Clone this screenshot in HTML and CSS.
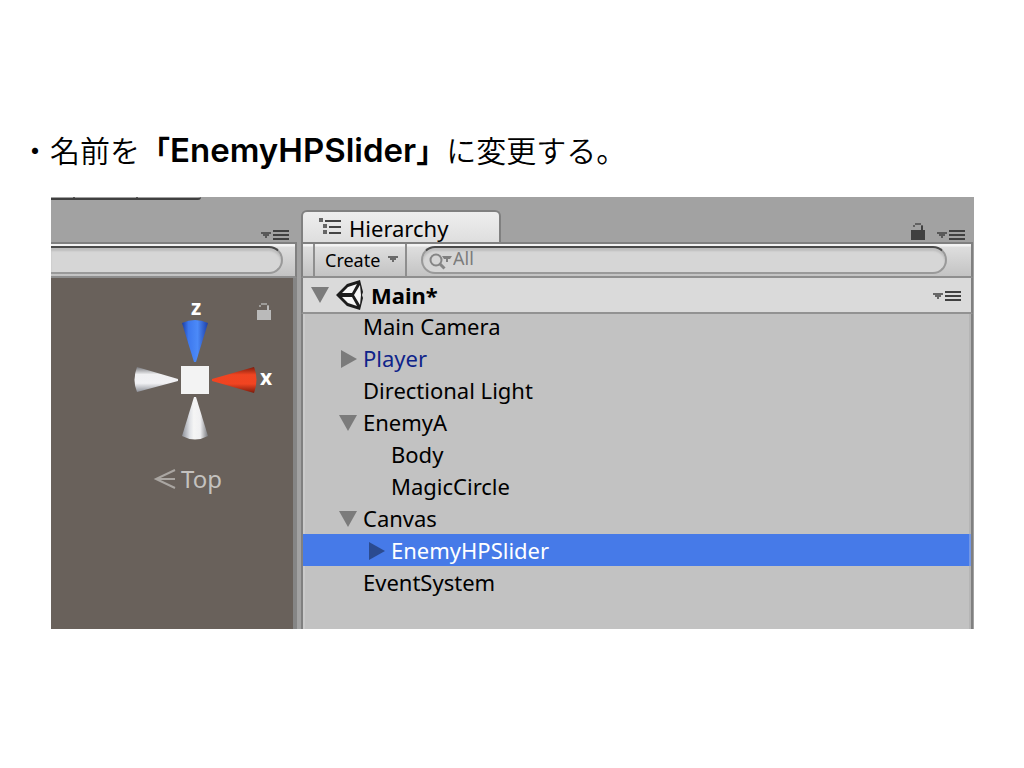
FILE: index.html
```html
<!DOCTYPE html>
<html lang="ja">
<head>
<meta charset="utf-8">
<title>EnemyHPSlider</title>
<link rel="stylesheet" href="styles.css">
</head>
<body>
<svg class="defs" aria-hidden="true">
  <defs>
    <symbol id="menu" viewBox="0 0 28 12"><path d="M0 4h10v2H8v2H6v2H4V8H2V6H0z" fill="currentColor" opacity=".75"/><path d="M12 3h16M12 7h16M12 11h16" stroke="currentColor" stroke-width="2"/></symbol>
    <symbol id="lock" viewBox="0 0 14 18"><path d="M0 8h14v10H0zM10 4h2v4h-2z" fill="currentColor"/><path d="M2 3h2V1h6v2h2v2h-2V3H4v2H2z" fill="currentColor" opacity=".65"/></symbol>
    <symbol id="open" viewBox="0 0 18 16"><path d="M0 0h18L9 16z" fill="currentColor"/></symbol>
    <symbol id="closed" viewBox="0 0 16 18"><path d="M0 0l16 9L0 18z" fill="currentColor"/></symbol>
    <linearGradient id="blue"><stop offset="0" stop-color="#1c3fa5"/><stop offset=".25" stop-color="#3d78ee"/><stop offset=".6" stop-color="#4c8af8"/><stop offset="1" stop-color="#1d3fa8"/></linearGradient>
    <linearGradient id="white"><stop offset="0" stop-color="#8d9098"/><stop offset=".3" stop-color="#dfe1e6"/><stop offset=".45" stop-color="#f5f5f5"/><stop offset=".7" stop-color="#f0f0f2"/><stop offset="1" stop-color="#77787c"/></linearGradient>
    <linearGradient id="side" x2="0" y2="1"><stop offset="0" stop-color="#77787c"/><stop offset=".3" stop-color="#f0f0f2"/><stop offset=".65" stop-color="#f1f1f4"/><stop offset="1" stop-color="#8d9098"/></linearGradient>
    <linearGradient id="red" x2="0" y2="1"><stop offset="0" stop-color="#7c1c0c"/><stop offset=".3" stop-color="#ef4522"/><stop offset=".65" stop-color="#f14421"/><stop offset="1" stop-color="#7c1c0c"/></linearGradient>
  </defs>
</svg>
<main class="slide">
  <h1 class="title">・名前を<b>「<span class="latin">EnemyHPSlider</span>」</b>に変更する。</h1>
  <div class="editor">
    <section class="scene">
      <div class="tabbar">
        <div class="cut-toolbar"><i></i><i></i><i></i></div>
        <button class="icon-button" aria-label="Scene menu"><svg width="28" height="12"><use href="#menu"/></svg></button>
      </div>
      <div class="toolbar"><input class="search cut" type="text" aria-label="Search scene"></div>
      <div class="viewport">
        <svg class="gizmo" width="160" height="210" viewBox="0 0 160 210" role="img" aria-label="Scene gizmo">
          <text x="67" y="25" class="axis">z</text>
          <path d="M53 33Q66 27 79 33L67 72h-2z" fill="url(#blue)"/>
          <path d="M65 107h2l12 39q-13 7-26 0z" fill="url(#white)"/>
          <path d="M8 77L49 89v2L8 102q-5-12 0-25z" fill="url(#side)"/>
          <path d="M83 89L125 77q5 12 0 26L83 91z" fill="url(#red)"/>
          <path d="M52 76h28v28H52z" fill="#f3f3f3"/>
          <text x="137" y="95" class="axis">x</text>
          <path d="M46 180L27 189l19 9M27 189h19" fill="none" stroke="#aaa6a2" stroke-width="2"/>
          <text x="52" y="198" class="view">Top</text>
        </svg>
        <svg class="scene-lock" width="14" height="18"><use href="#lock"/></svg>
      </div>
    </section>
    <section class="hierarchy">
      <div class="tabbar">
        <div class="tab">
          <svg width="22" height="18" viewBox="0 0 22 18"><path d="M0 0h4v4H0zM4 6h4v4H4zM4 12h4v4H4z" fill="#666"/><path d="M6 3h16M10 9h12M10 15h12" stroke="#444" stroke-width="2"/></svg>
          <span>Hierarchy</span>
        </div>
        <div class="tab-icons">
          <button class="icon-button lock" aria-label="Lock"><svg width="14" height="18"><use href="#lock"/></svg></button>
          <button class="icon-button" aria-label="Hierarchy menu"><svg width="28" height="12"><use href="#menu"/></svg></button>
        </div>
      </div>
      <div class="toolbar">
        <button class="create">Create <svg width="10" height="6" viewBox="0 0 10 6"><path d="M0 0h10v2H8v2H6v2H4V4H2V2H0z" fill="#6a6a6a"/></svg></button>
        <label class="searchbox">
          <svg width="24" height="18" viewBox="0 0 24 18"><circle cx="7" cy="8" r="5.500" fill="none" stroke="#858585" stroke-width="2"/><path d="M10.500 11.500l5 5" stroke="#858585" stroke-width="3"/><path d="M13 4h10l-2 3h-2v3h-2V7h-2z" fill="#808080"/></svg>
          <input class="search" type="text" placeholder="All" aria-label="Search hierarchy">
        </label>
      </div>
      <div class="scene-row">
        <svg class="arrow" width="18" height="16"><use href="#open"/></svg>
        <svg width="28" height="30" viewBox="0 0 28 30"><path d="M0 15L11 4 24 0l3 12-1 3 1 3-3 12-13-4z" fill="#1c1c1c"/><path d="M6 13L12 7l9-3-5 9zM6 17h10l5 9-9-3zM18 15l6-10 1 10-1 10z" fill="#f6f6f6"/></svg>
        <strong>Main*</strong>
        <button class="icon-button" aria-label="Scene options"><svg width="28" height="12"><use href="#menu"/></svg></button>
      </div>
      <ul class="tree">
        <li>Main Camera</li>
        <li class="prefab"><svg class="closed" width="16" height="18"><use href="#closed"/></svg>Player</li>
        <li>Directional Light</li>
        <li><svg class="arrow" width="18" height="16"><use href="#open"/></svg>EnemyA</li>
        <li class="child">Body</li>
        <li class="child">MagicCircle</li>
        <li><svg class="arrow" width="18" height="16"><use href="#open"/></svg>Canvas</li>
        <li class="child selected"><svg class="closed" width="16" height="18"><use href="#closed"/></svg>EnemyHPSlider</li>
        <li>EventSystem</li>
      </ul>
    </section>
  </div>
</main>
</body>
</html>
```
FILE: styles.css
```css
* { box-sizing: border-box; }
body { margin: 0; background: #fff; color: #000; }
svg { display: block; flex: none; }
.defs { position: absolute; width: 0; height: 0; }
.slide { padding: 127px 50px 0 51px; }
.title { margin: 0 0 25px -31px; font: 350 30px/45px "Noto Sans CJK JP", sans-serif; white-space: nowrap; }
.title b { font-weight: 700; }
.latin { font-family: Inter, sans-serif; font-weight: 600; font-size: 33px; line-height: 32px; }
.editor { display: flex; gap: 4px; height: 432px; background: #a2a2a2; font: 22px/32px "Noto Sans", sans-serif; overflow: hidden; }
.scene { flex: 0 0 246px; display: flex; flex-direction: column; }
.hierarchy { flex: 1; min-width: 0; display: flex; flex-direction: column; margin-right: 1px; }
.tabbar { flex: 0 0 45px; display: flex; justify-content: space-between; align-items: flex-end; }
.scene .tabbar { padding-right: 8px; }
.scene .tabbar .icon-button { margin-bottom: 2px; }
.cut-toolbar { align-self: flex-start; display: flex; width: 150px; height: 3px; border-bottom: 2px solid #404040; border-radius: 0 0 4px 0; }
.cut-toolbar i { width: 64px; border-right: 2px solid #555; }
.cut-toolbar i:first-child { width: 24px; }
.cut-toolbar i:last-child { border: 0; }
.icon-button { display: block; padding: 0; border: 0; background: none; color: #404040; }
.toolbar { flex: 0 0 36px; display: flex; align-items: center; border: solid #808080; border-width: 2px 2px 2px 0; border-bottom-color: #8e8e8e; background: linear-gradient(#f3f3f3 2px, #dedede 3px, #c3c3c3); }
.search { width: 100%; height: 28px; padding: 0 14px 4px 30px; border: 2px solid #999; border-top-color: #4a4a4a; border-radius: 14px; background: #d6d6d6; box-shadow: inset 0 3px 2px #bebebe; font: 18px/22px "Noto Sans", sans-serif; color: #777; outline: 0; }
.search::placeholder { color: #7c7c7c; opacity: 1; }
.search.cut { margin-right: 12px; border-left: 0; border-radius: 0 14px 14px 0; }
.viewport { position: relative; flex: 1; background: #69615b; border-right: 4px solid #858585; }
.gizmo { margin: 12px 0 0 78px; }
.axis { font: 700 21px "Open Sans", sans-serif; fill: #fff; text-anchor: middle; }
.view { font: 24px "Noto Sans", sans-serif; fill: #c4c2bf; }
.scene-lock { position: absolute; top: 24px; right: 22px; color: #bababa; }
.tab { display: flex; align-items: center; gap: 8px; width: 200px; height: 32px; padding: 2px 0 0 16px; border: 2px solid #808080; border-bottom: 0; border-radius: 6px 6px 0 0; background: linear-gradient(#eee, #dedede); }
.tab svg { margin-top: -2px; }
.tab-icons { display: flex; align-items: flex-end; gap: 12px; padding: 0 8px 2px 0; }
.hierarchy .toolbar { border-left-width: 2px; padding: 0 24px 0 10px; }
.create { flex: 0 0 94px; display: flex; align-items: center; gap: 8px; height: 32px; margin-right: 14px; padding: 0 0 0 10px; border: solid #8e8e8e; border-width: 0 2px; background: none; font: 18px/32px "Noto Sans", sans-serif; color: #000; }
.create svg { margin-top: -3px; }
.searchbox { position: relative; flex: 1; display: flex; }
.searchbox svg { position: absolute; left: 8px; top: 6px; }
.scene-row { flex: 0 0 36px; display: flex; align-items: center; padding: 0 10px 0 8px; border: 2px solid #808080; border-top: 0; border-bottom-color: #929292; background: #dadada; }
.scene-row .arrow { margin-right: 7px; }
.scene-row strong { margin-left: 7px; font-weight: 700; }
.scene-row .icon-button { margin-left: auto; }
.arrow, .closed { color: #7b7b7b; }
.tree { flex: 1; margin: 0; padding: 0; list-style: none; background: #c2c2c2; border: solid #808080; border-width: 0 2px; box-shadow: inset 2px 0 #cbcbcb, inset -2px 0 #b5b5b5; }
.tree li { display: flex; align-items: center; height: 32px; padding-left: 60px; white-space: nowrap; }
.tree li:first-child { margin-top: -4px; }
.tree .child { padding-left: 88px; }
.tree .arrow { margin: 2px 6px 0 -24px; }
.tree .closed { margin: 2px 6px 0 -22px; }
.tree .prefab { color: #0f248a; }
.tree .selected { background: #467ae8; color: #fff; border-right: 2px solid #7397e6; }
.selected .closed { color: #2b4b90; }
```
